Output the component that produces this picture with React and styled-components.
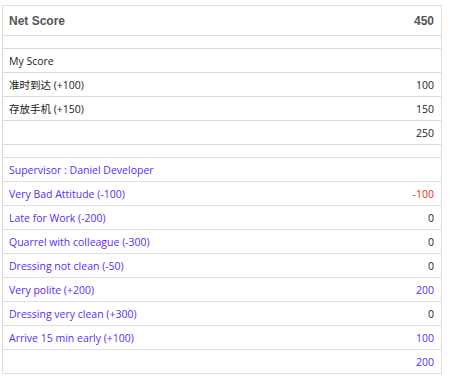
import React from "react";
import styled, { createGlobalStyle } from "styled-components";

const GlobalStyle = createGlobalStyle`
  body {
    margin: 0;
    background: #fff;
    font-family: "Open Sans", "Noto Sans CJK SC", sans-serif;
  }
`;

const myScores = [
  { label: "准时到达 (+100)", value: 100 },
  { label: "存放手机 (+150)", value: 150 },
];

const supervisorScores = [
  { label: "Very Bad Attitude (-100)", value: -100 },
  { label: "Late for Work (-200)", value: 0 },
  { label: "Quarrel with colleague (-300)", value: 0 },
  { label: "Dressing not clean (-50)", value: 0 },
  { label: "Very polite (+200)", value: 200 },
  { label: "Dressing very clean (+300)", value: 0 },
  { label: "Arrive 15 min early (+100)", value: 100 },
];

const valueTone = (v) => (v < 0 ? "negative" : v > 0 ? "purple" : "plain");

function App() {
  const myTotal = myScores.reduce((s, r) => s + r.value, 0);
  const supTotal = supervisorScores.reduce((s, r) => s + r.value, 0);

  return (
    <>
      <GlobalStyle />
      <Table>
        <HeaderRow>
          <HeaderText>Net Score</HeaderText>
          <HeaderText>{myTotal + supTotal}</HeaderText>
        </HeaderRow>
        <Spacer />

        <Row>
          <Label>My Score</Label>
        </Row>
        {myScores.map((r) => (
          <Row key={r.label}>
            <Label>{r.label}</Label>
            <Value>{r.value}</Value>
          </Row>
        ))}
        <Row>
          <Label />
          <Value>{myTotal}</Value>
        </Row>
        <Spacer />

        <Row>
          <Label $purple>Supervisor : Daniel Developer</Label>
        </Row>
        {supervisorScores.map((r) => (
          <Row key={r.label}>
            <Label $purple>{r.label}</Label>
            <Value $tone={valueTone(r.value)}>{r.value}</Value>
          </Row>
        ))}
        <Row>
          <Label />
          <Value $tone="purple">{supTotal}</Value>
        </Row>
      </Table>
    </>
  );
}

export default App;

const Table = styled.div`
  margin: 5px 0 0 2px;
  width: 440px;
  box-sizing: border-box;
  border: 1px solid #dddddd;
  border-bottom: none;
`;

const Row = styled.div`
  display: flex;
  align-items: center;
  justify-content: space-between;
  height: 24px;
  box-sizing: border-box;
  padding: 0 7px 0 6px;
  border-bottom: 1px solid #dddddd;
  font-size: 10.5px;
`;

const HeaderRow = styled(Row)`
  height: 30px;
`;

const Spacer = styled.div`
  height: 13px;
  box-sizing: border-box;
  border-bottom: 1px solid #dddddd;
`;

const HeaderText = styled.span`
  font-family: "Liberation Sans", Arial, sans-serif;
  font-weight: bold;
  font-size: 12px;
  color: #555555;
`;

const Label = styled.span`
  color: ${(p) => (p.$purple ? "#5b2cf6" : "#222222")};
`;

const Value = styled.span`
  color: ${(p) =>
    p.$tone === "negative"
      ? "#ff2020"
      : p.$tone === "purple"
      ? "#5b2cf6"
      : "#222222"};
`;
